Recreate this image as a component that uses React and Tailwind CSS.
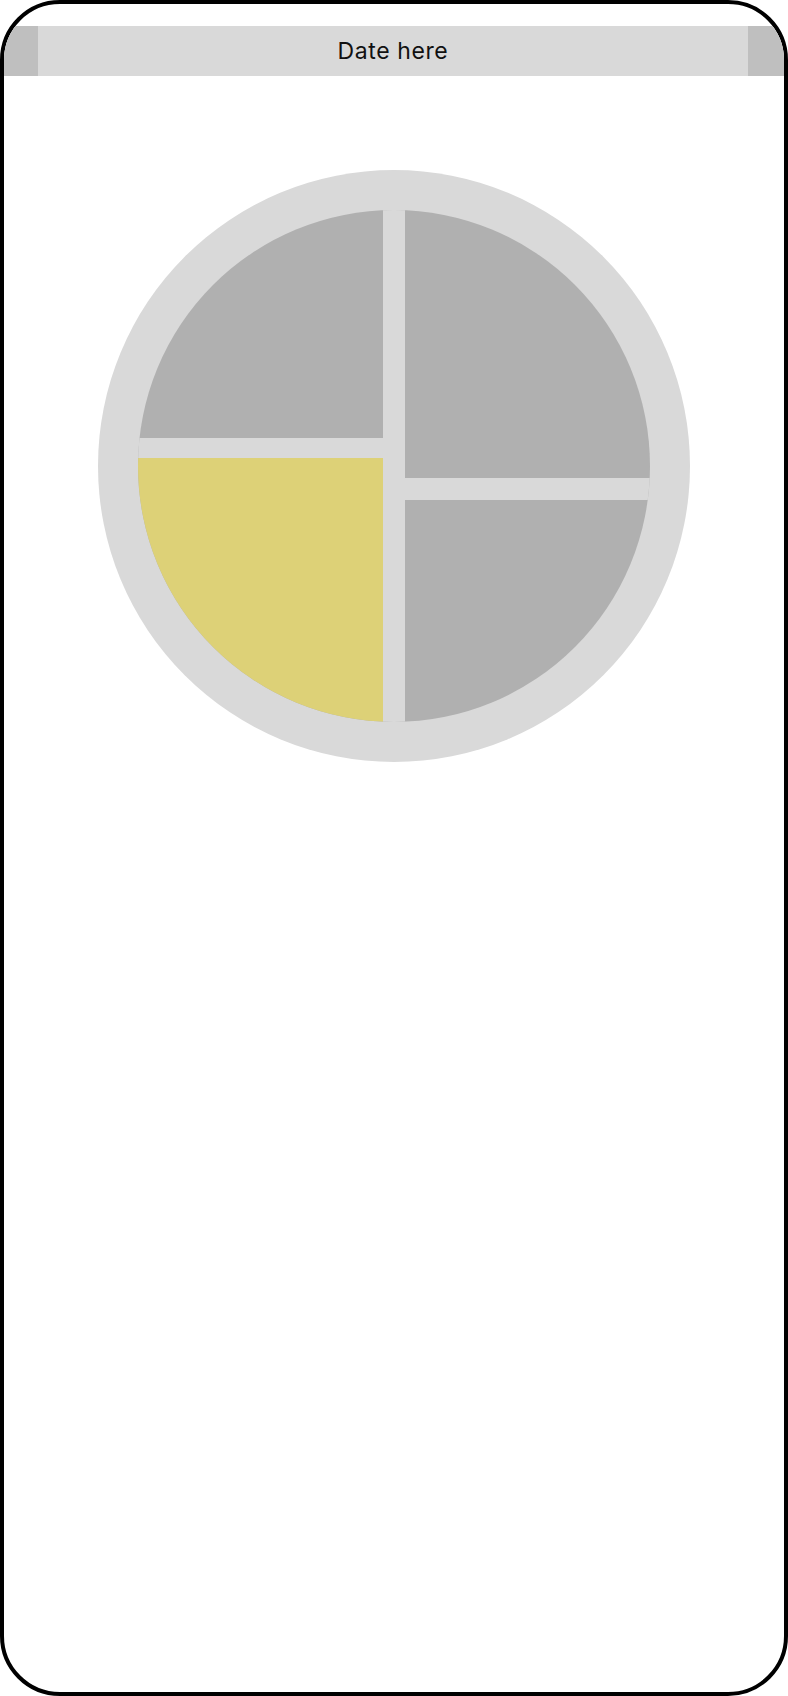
import React from "react";

const Dial = () => {
  // quarter segments inside a ring, bottom-left one highlighted
  return (
    <svg width="592" height="592" viewBox="0 0 592 592">
      <defs>
        <clipPath id="inner">
          <circle cx="296" cy="296" r="256" />
        </clipPath>
      </defs>
      <circle cx="296" cy="296" r="296" fill="#d9d9d9" />
      <g clipPath="url(#inner)">
        <rect x="0" y="0" width="592" height="592" fill="#b0b0b0" />
        <rect x="0" y="288" width="285" height="304" fill="#ddd177" />
        <rect x="285" y="0" width="22" height="592" fill="#d9d9d9" />
        <rect x="0" y="268" width="296" height="20" fill="#d9d9d9" />
        <rect x="296" y="308" width="296" height="22" fill="#d9d9d9" />
      </g>
    </svg>
  );
};

export default function App() {
  return (
    <div className="w-[788px] h-[1696px] bg-white">
      <div
        className="w-full h-full border-[4px] border-black rounded-[60px] overflow-hidden bg-white flex flex-col"
        style={{ fontFamily: "Inter, 'Noto Sans', sans-serif" }}
      >
        {/* Date bar */}
        <div className="mt-[22px] h-[50px] flex bg-[#d9d9d9]">
          <div className="w-[34px] bg-[#bfbfbf]" />
          <div className="flex-1 flex items-center justify-center text-[23px] tracking-[0.6px] text-[#111111]">
            Date here
          </div>
          <div className="w-[36px] bg-[#bfbfbf]" />
        </div>

        {/* Dial */}
        <div className="mt-[94px] flex justify-center">
          <Dial />
        </div>
      </div>
    </div>
  );
}
